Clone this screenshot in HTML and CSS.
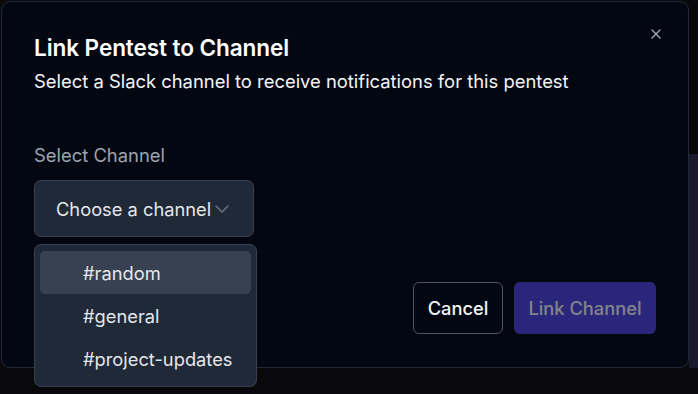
FILE: index.html
```html
<!DOCTYPE html>
<html lang="en">
<head>
<meta charset="utf-8">
<title>Link Pentest to Channel</title>
<link rel="stylesheet" href="styles.css">
</head>
<body>
<div class="page">
  <div class="page-top"></div>
  <div class="page-row">
    <div class="page-main"></div>
    <div class="page-panel"></div>
  </div>
</div>

<div class="dialog" role="dialog">
  <button class="close" aria-label="Close">
    <svg width="16" height="16" viewBox="0 0 24 24" fill="none" stroke="currentColor" stroke-width="2" stroke-linecap="round" stroke-linejoin="round"><path d="M18 6 6 18"/><path d="m6 6 12 12"/></svg>
  </button>
  <div class="header">
    <h2 class="title">Link Pentest to Channel</h2>
    <p class="desc">Select a Slack channel to receive notifications for this pentest</p>
  </div>
  <div class="field">
    <label class="label">Select Channel</label>
    <div class="select-wrap">
      <button class="trigger">
        <span>Choose a channel</span>
        <svg class="chev" width="24" height="24" viewBox="0 0 24 24" fill="none" stroke="currentColor" stroke-width="1.5" stroke-linecap="round" stroke-linejoin="round"><path d="m6 9 6 6 6-6"/></svg>
      </button>
      <div class="menu">
        <div class="item active">#random</div>
        <div class="item">#general</div>
        <div class="item">#project-updates</div>
      </div>
    </div>
  </div>
  <div class="footer">
    <button class="btn btn-outline">Cancel</button>
    <button class="btn btn-primary" disabled>Link Channel</button>
  </div>
</div>
</body>
</html>
```

FILE: styles.css
```css
* { box-sizing: border-box; }
html, body { margin: 0; padding: 0; }
body {
  width: 698px;
  height: 394px;
  background: #09090b;
  font-family: Inter, "Noto Sans", "Liberation Sans", sans-serif;
  overflow: hidden;
  position: relative;
}
.page { height: 394px; display: flex; flex-direction: column; }
.page-top { height: 154px; }
.page-row { flex: 1; display: flex; }
.page-main { flex: 1; }
.page-panel { width: 9px; background: #1b1a2d; height: 214px; }

.dialog {
  position: absolute;
  left: 1px;
  top: 1px;
  width: 688px;
  height: 367px;
  background: #030712;
  border: 1px solid #1f2937;
  border-radius: 9px;
  padding: 32px 32px 33px 32px;
  display: flex;
  flex-direction: column;
  color: #f9fafb;
}
.close {
  position: absolute;
  right: 24px;
  top: 24px;
  background: none;
  border: 0;
  padding: 0;
  color: #9ca3af;
  width: 16px;
  height: 16px;
  display: flex;
}
.header { display: flex; flex-direction: column; gap: 6px; }
.title {
  margin: 0;
  font-size: 22.6px;
  line-height: 28px;
  font-weight: 600;
  letter-spacing: -0.1px;
  color: #ffffff;
}
.desc {
  margin: 0;
  font-size: 18.4px;
  line-height: 26px;
  color: #f3f4f6;
}
.field { margin-top: 48px; display: flex; flex-direction: column; gap: 12px; }
.label {
  font-size: 18.4px;
  line-height: 26px;
  color: #9ca3af;
}
.select-wrap { position: relative; align-self: flex-start; }
.trigger {
  display: inline-flex;
  align-items: center;
  height: 57px;
  padding: 0 19px 0 21px;
  background: #1f2937;
  border: 1px solid #374151;
  border-radius: 7px;
  font-family: inherit;
  font-size: 18.3px;
  color: #e5e7eb;
}
.chev { color: #6b7280; margin-left: -1px; }
.menu {
  position: absolute;
  left: 0;
  top: 64px;
  width: 223px;
  background: #1f2937;
  border: 1px solid #374151;
  border-radius: 7px;
  padding: 6px 5px 6px 5px;
  display: flex;
  flex-direction: column;
  gap: 0;
  z-index: 2;
}
.item {
  height: 43px;
  display: flex;
  align-items: center;
  padding-left: 43px;
  font-size: 18.3px;
  color: #e5e7eb;
  border-radius: 5px;
}
.item.active { background: #374151; }
.footer {
  margin-top: auto;
  display: flex;
  justify-content: flex-end;
  gap: 11px;
}
.btn {
  height: 52px;
  border-radius: 6px;
  font-family: inherit;
  font-size: 18.3px;
  font-weight: 500;
  padding: 0;
}
.btn-outline {
  width: 90px;
  background: transparent;
  border: 1px solid #4b5563;
  color: #f3f4f6;
}
.btn-primary {
  width: 142px;
  background: #4f46e5;
  border: 0;
  color: #ffffff;
  opacity: 0.5;
}
```
